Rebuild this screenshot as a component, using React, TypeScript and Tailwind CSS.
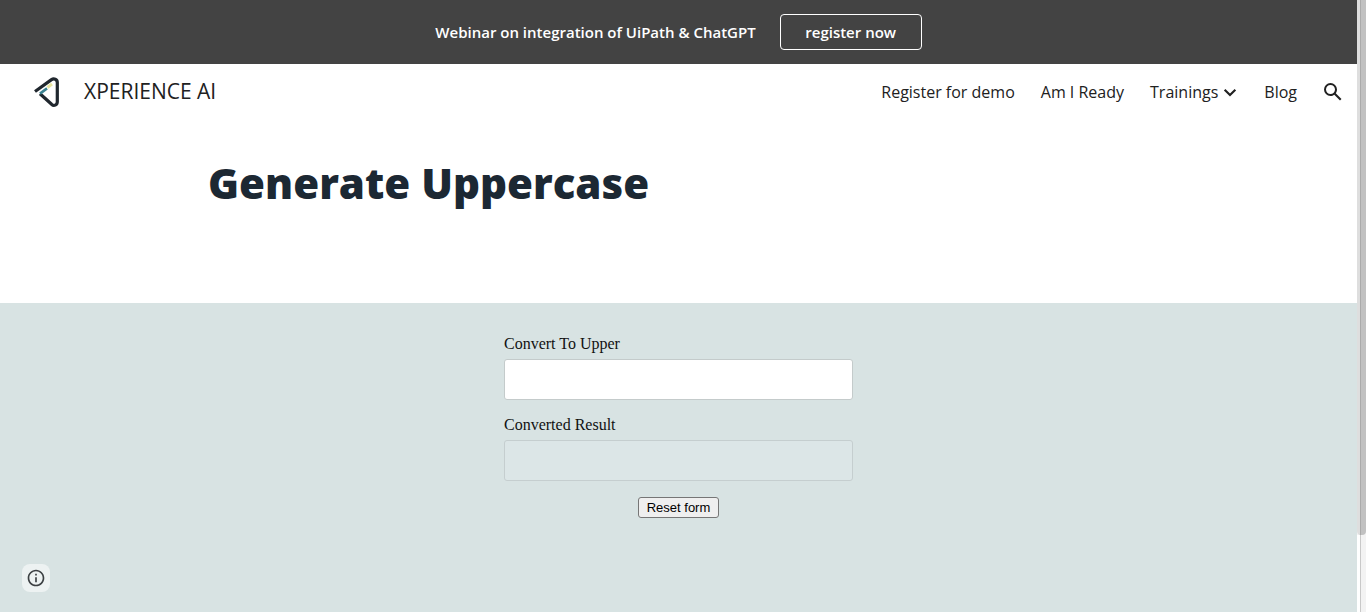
import { useState } from "react";

const navLink = "flex items-center whitespace-nowrap";

function Logo() {
  return (
    <svg width="28" height="34" viewBox="0 0 28 34" fill="none" aria-hidden="true">
      <path d="M3 16.5 19.5 4.6C21.9 3 25.3 4.2 25.3 7.4v19.4c0 3.3-3.4 4.7-5.7 2.5L8 18.8" stroke="#20272e" strokeWidth="3.2" strokeLinejoin="round" />
      <path d="M8 18.6 15 13.4" stroke="#3b8291" strokeWidth="2.6" />
      <path d="M15.5 12.5 20 9" stroke="#e9e6a0" strokeWidth="3" />
    </svg>
  );
}

function Banner() {
  return (
    <div className="flex h-16 items-center justify-center gap-6 bg-[#434343] text-[15px] font-semibold text-white">
      <p>Webinar on integration of UiPath &amp; ChatGPT</p>
      <a href="#register" className="flex h-9 w-[142px] items-center justify-center rounded border border-white">
        register now
      </a>
    </div>
  );
}

function Header() {
  return (
    <header className="flex h-14 items-center justify-between pr-3 pl-8 text-[#212121]">
      <a href="#home" className="flex items-center gap-6 text-[21px]">
        <Logo />
        <span>XPERIENCE AI</span>
      </a>
      <nav className="flex items-center gap-[26px] text-base">
        <a href="#demo" className={navLink}>Register for demo</a>
        <a href="#ready" className={navLink}>Am I Ready</a>
        <a href="#trainings" className={`${navLink} -mr-1`}>
          Trainings
          <svg width="24" height="24" viewBox="0 0 24 24" fill="currentColor" aria-hidden="true">
            <path d="M5.9 9.4 7.4 7.9 12 12.5l4.6-4.6 1.5 1.5-6.1 6.1z" transform="translate(0 1)" />
          </svg>
        </a>
        <a href="#blog" className={navLink}>Blog</a>
        <button type="button" aria-label="Search" className="-ml-0.5">
          <svg width="24" height="24" viewBox="0 0 24 24" fill="currentColor" aria-hidden="true">
            <path d="M20.49 19l-5.73-5.73C15.53 12.2 16 10.91 16 9.5A6.5 6.5 0 1 0 9.5 16c1.41 0 2.7-.47 3.77-1.24L19 20.49 20.49 19zM5 9.5C5 7.01 7.01 5 9.5 5S14 7.01 14 9.5 11.99 14 9.5 14 5 11.99 5 9.5z" />
          </svg>
        </button>
      </nav>
    </header>
  );
}

function ConvertForm() {
  const [text, setText] = useState("");
  const field = "h-[41px] w-full rounded-[3px] border px-3";
  return (
    <form
      className="mx-auto flex w-[349px] flex-col pt-[31px] font-['Liberation_Serif',serif] text-base text-[#111]"
      onSubmit={(e) => e.preventDefault()}
      onReset={() => setText("")}
    >
      <label htmlFor="source" className="mb-[5px] leading-5">Convert To Upper</label>
      <input id="source" value={text} onChange={(e) => setText(e.target.value)} className={`${field} border-[#c4cbcb] bg-white`} />
      <label htmlFor="result" className="mt-[15px] mb-[5px] leading-5">Converted Result</label>
      <input id="result" disabled value={text.toUpperCase()} className={`${field} border-[#c5cecf] bg-[#dce6e7]`} />
      <button
        type="reset"
        className="mt-4 self-center rounded-[3px] border border-[#767676] bg-[#efefef] px-2 font-['Liberation_Sans',sans-serif] text-[13px] leading-[19px] text-black"
      >
        Reset form
      </button>
    </form>
  );
}

export default function App() {
  return (
    <div className="flex min-h-screen bg-white font-['Open_Sans',sans-serif]">
      <div className="flex min-w-0 flex-1 flex-col">
        <Banner />
        <Header />
        <main className="flex flex-1 flex-col">
          <section className="h-[183px] px-[208px] pt-8">
            <h1 className="text-[42px] leading-[62px] font-extrabold whitespace-nowrap text-[#1c2833]">Generate Uppercase</h1>
          </section>
          <section className="flex-1 bg-[#d8e3e3]">
            <ConvertForm />
          </section>
        </main>
      </div>
      <div className="flex w-[9px] shrink-0 flex-col bg-[#f3f3f3]" aria-hidden="true">
        <div className="h-[535px] rounded-b-sm border-l-[3px] border-[#dedede] bg-[#c1c1c1]">
          <div className="h-full w-px bg-[#aaaaaa]" />
        </div>
        <div className="flex-1 border-l-[3px] border-white">
          <div className="h-full w-px bg-[#c9c9c9]" />
        </div>
      </div>
      <button
        type="button"
        aria-label="Site information"
        className="fixed bottom-5 left-[22px] flex size-7 items-center justify-center rounded-lg bg-[#edf2f2] text-[#3c4043]"
      >
        <svg width="20" height="20" viewBox="0 0 24 24" fill="currentColor" aria-hidden="true">
          <path d="M11 17h2v-6h-2v6zm1-15C6.48 2 2 6.48 2 12s4.48 10 10 10 10-4.48 10-10S17.52 2 12 2zm0 18c-4.41 0-8-3.59-8-8s3.59-8 8-8 8 3.59 8 8-3.59 8-8 8zM11 9h2V7h-2v2z" />
        </svg>
      </button>
    </div>
  );
}
